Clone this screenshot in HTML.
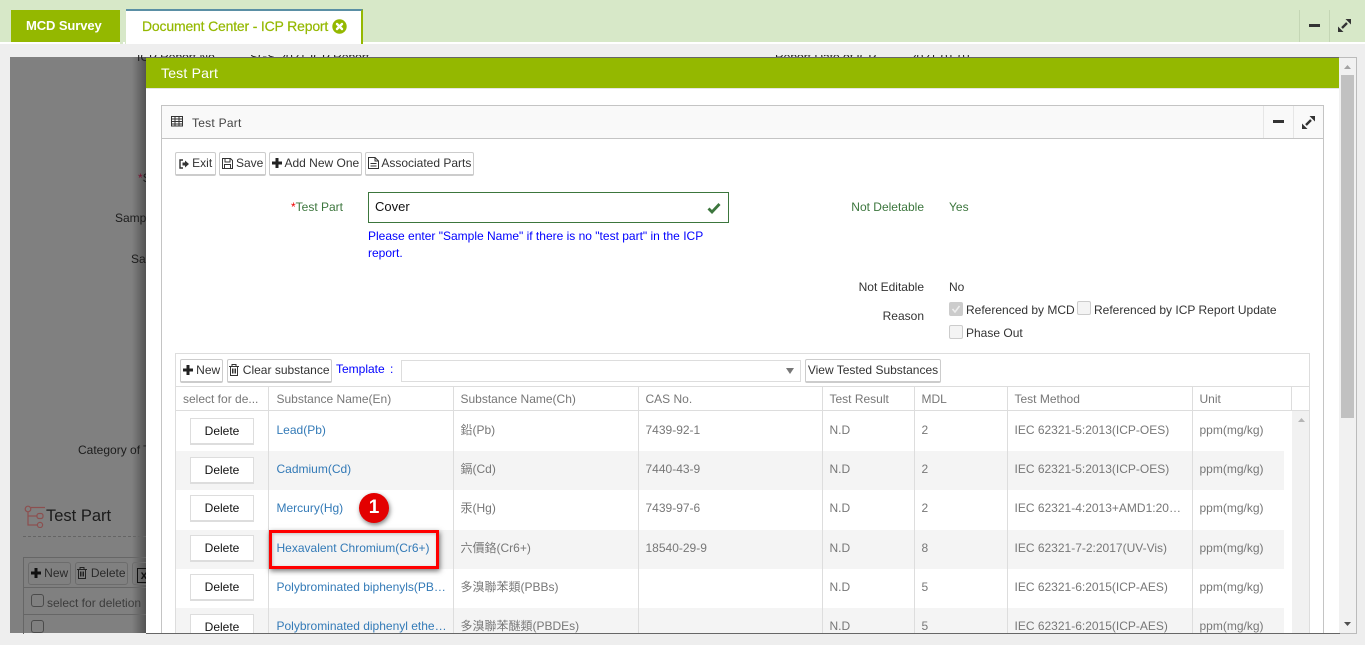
<!DOCTYPE html>
<html><head><meta charset="utf-8">
<style>
html,body{margin:0;padding:0;width:1365px;height:645px;overflow:hidden;background:#eee;font:12px/17px "Liberation Sans","Noto Sans CJK TC",sans-serif;color:#333}
.a{position:absolute;white-space:nowrap}
.btn{position:absolute;height:21px;border:1px solid #ccc;border-bottom:2px solid #ccc;border-radius:2px;background:#fff;line-height:20px;box-sizing:content-box;color:#333;white-space:nowrap;text-align:center}
.btn svg{vertical-align:-2px}
.cb{position:absolute;width:12px;height:12px;border:1px solid #ccc;border-radius:2px;background:#f4f4f4}
.gb{position:absolute;border:1px solid #6c6c6c;border-radius:3px;height:21px;line-height:21px;color:#222;text-align:center;white-space:nowrap}
table{border-collapse:collapse;table-layout:fixed;position:absolute;color:#777}
td{padding:0 7px;border-left:1px solid #ddd;white-space:nowrap;overflow:hidden;text-overflow:ellipsis;box-sizing:border-box}
td:first-child{border-left:0}
.head td{padding-top:2px}
.body tr:nth-child(even) td{background:#f4f4f4}
.body td{vertical-align:top;padding-right:5px;padding-top:10px}
.body tr:nth-child(1) td{padding-top:11px}
.l{color:#337ab7;padding-left:8px !important}
.del{display:block;width:62px;height:24px;border:1px solid #ddd;border-width:1px 1px 2px;background:#fff;color:#111;text-align:center;line-height:24px;margin:5px 0 0 14px}
.body tr:nth-child(1) .del{margin-top:7px}
.body tr:nth-child(2) .del{margin-top:6px}
.body tr:nth-child(6) .del{margin-top:6px}
</style></head><body>

<!-- top bar -->
<div class="a" style="left:0;top:0;width:1365px;height:42px;background:#d7e8c8"></div>
<div class="a" style="left:0;top:42px;width:1365px;height:2px;background:#fff"></div>
<div class="a" style="left:11px;top:10px;width:109px;height:32px;background:#94b800"></div>
<div class="a" style="left:26px;top:17px;color:#fff;font-weight:bold;font-size:13px;letter-spacing:-.1px">MCD Survey</div>
<div class="a" style="left:120px;top:42px;width:3px;height:2px;background:#d7e8c8"></div>
<div class="a" style="left:126px;top:9px;height:35px;background:#fff;border-top:2px solid #5a8fa5;border-right:2px solid #94b800;box-sizing:border-box;width:237px;box-shadow:-1px 0 0 #d7e8c8"></div>
<div class="a" style="left:142px;top:18px;color:#94b800;font-size:14px;letter-spacing:-.18px;-webkit-text-stroke:.2px #94b800">Document Center - ICP Report</div>
<svg class="a" style="left:332px;top:19px" width="15" height="15" viewBox="0 0 15 15"><circle cx="7.5" cy="7.5" r="7.2" fill="#94b800"/><path d="M5 5l5 5M10 5l-5 5" stroke="#fff" stroke-width="2.4" stroke-linecap="round"/></svg>
<div class="a" style="left:1299px;top:10px;width:1px;height:32px;background:#c4d6b5"></div>
<div class="a" style="left:1329px;top:10px;width:1px;height:32px;background:#c4d6b5"></div>
<div class="a" style="left:1309px;top:24px;width:11px;height:3px;background:#333"></div>
<svg class="a" style="left:1338px;top:19px" width="13" height="13" viewBox="0 0 13 13"><path d="M4 9L9 4" stroke="#333" stroke-width="2.4"/><path d="M7.500 0H13V5.500zM0 7.500V13H5.500z" fill="#333"/></svg>

<!-- dimmed background -->
<div class="a" style="left:10px;top:57px;width:136px;height:576px;background:#808080"></div>
<div class="a" style="left:132px;top:57px;width:14px;height:576px;background:linear-gradient(to right,rgba(0,0,0,0),rgba(0,0,0,.35))"></div>

<!-- clipped background text -->
<div class="a" style="left:137px;top:55px;width:900px;height:9px;overflow:hidden;color:#222">
<span class="a" style="left:0;top:-6px">ICP Report No.</span>
<span class="a" style="left:113px;top:-6px">SGS-2021-ICP Report</span>
<span class="a" style="left:638px;top:-6px">Report Date of ICP</span>
<span class="a" style="left:773px;top:-6px">2021-01-01</span>
</div>

<div class="a" style="left:138px;top:170px;color:#7a1030">*<span style="color:#1a1a1a">S</span></div>
<div class="a" style="left:115px;top:210px;color:#1c1c1c">Samp</div>
<div class="a" style="left:131px;top:251px;color:#1c1c1c">Sa</div>
<div class="a" style="left:78px;top:442px;color:#1c1c1c">Category of T</div>
<svg class="a" style="left:24px;top:505px" width="22" height="23" viewBox="0 0 22 23" fill="none" stroke="#8c4f4f" stroke-width="1.2"><circle cx="4" cy="4" r="2.8"/><path d="M7 2.5h14M4 7v13h9M4 11h9"/><rect x="13" y="8.5" width="6" height="5" rx="2"/><circle cx="16" cy="20" r="2.6"/></svg>
<div class="a" style="left:46px;top:506px;font-size:16.5px;line-height:20px;color:#1a1a1a">Test Part</div>
<div class="a" style="left:23px;top:536px;width:123px;border-top:1px dashed #646464"></div>
<div class="a" style="left:23px;top:557px;width:123px;height:76px;border-left:1px solid #666;border-top:1px solid #666"></div>
<div class="a" style="left:24px;top:587px;width:122px;height:1px;background:#666"></div>
<div class="a" style="left:24px;top:614px;width:122px;height:1px;background:#666"></div>
<div class="gb" style="left:28px;top:562px;width:41px"><svg width="10" height="10" viewBox="0 0 10 10" style="vertical-align:-1px"><path d="M3.5 0h3v3.5H10v3H6.500V10h-3V6.500H0v-3h3.500z" fill="#111"/></svg> <span style="color:#2a2a2a">New</span></div>
<div class="gb" style="left:75px;top:562px;width:51px"><svg width="10" height="12" viewBox="0 0 10 12" fill="none" stroke="#222" style="vertical-align:-2px"><path d="M0 2.500h10M3 2.500V.5h4v2M1.500 2.500v9h7v-9M3.500 4.500v5M5 4.500v5M6.500 4.500v5"/></svg> <span style="color:#2a2a2a">Delete</span></div>
<div class="gb" style="left:132px;top:562px;width:20px"></div>
<div class="a" style="left:137px;top:568px;font:bold 12px 'Liberation Sans';color:#111;border:1px solid #111;width:12px;height:13px;line-height:13px;text-align:center">x</div>
<div class="a" style="left:31px;top:594px;width:11px;height:11px;border:1px solid #4b4b4b;border-radius:3px"></div>
<div class="a" style="left:47px;top:595px;color:#3c3c3c">select for deletion</div>
<div class="a" style="left:31px;top:620px;width:11px;height:11px;border:1px solid #4b4b4b;border-radius:3px"></div>

<!-- modal -->
<div class="a" style="left:146px;top:57px;height:577px;background:#fff;overflow:hidden;border-top:1px solid #666;border-right:1px solid #bbb;box-sizing:border-box;width:1211px"></div>
<div class="a" style="left:1339px;top:57px;width:18px;height:1px;background:#bbb"></div>
<div class="a" style="left:146px;top:58px;width:1193px;height:30px;background:#94b800;color:#fff;font-size:14px;letter-spacing:.2px;line-height:30px;padding-left:15px;box-sizing:border-box">Test Part</div>
<div class="a" style="left:146px;top:88px;width:1193px;height:1px;background:#e5e5e5"></div>

<!-- modal scrollbar -->
<div class="a" style="left:1339px;top:58px;width:17px;height:575px;background:#f1f1f1"></div>
<div class="a" style="left:1341px;top:75px;width:13px;height:343px;background:#c1c1c1"></div>
<svg class="a" style="left:1343px;top:64px" width="9" height="6"><path d="M4.500 1L8 5H1z" fill="#a3a3a3"/></svg>
<svg class="a" style="left:1343px;top:621px" width="9" height="6"><path d="M4.500 5L8 1H1z" fill="#505050"/></svg>

<!-- panel -->
<div class="a" style="left:161px;top:105px;width:1163px;height:529px;border:1px solid #c4c4c4;border-bottom:0;box-sizing:border-box"></div>
<div class="a" style="left:162px;top:106px;width:1161px;height:32px;background:#f9f9f9;border-bottom:1px solid #c4c4c4"></div>
<svg class="a" style="left:171px;top:116px" width="12" height="11" viewBox="0 0 12 11" fill="none" stroke="#333"><path d="M.5.500h11v9.500H.5zM.5 3h11M.5 5.500h11M.5 8h11M4 .5V10M8 .5V10"/></svg>
<div class="a" style="left:192px;top:115px;letter-spacing:.25px;color:#444">Test Part</div>
<div class="a" style="left:1263px;top:106px;width:1px;height:32px;background:#e6e6e6"></div>
<div class="a" style="left:1293px;top:106px;width:1px;height:32px;background:#e6e6e6"></div>
<div class="a" style="left:1273px;top:120px;width:11px;height:3px;background:#333"></div>
<svg class="a" style="left:1302px;top:116px" width="13" height="13" viewBox="0 0 13 13"><path d="M4 9L9 4" stroke="#333" stroke-width="2.4"/><path d="M7.500 0H13V5.500zM0 7.500V13H5.500z" fill="#333"/></svg>

<!-- toolbar -->
<div class="btn" style="left:175px;top:152px;width:39px"><svg width="10" height="10" viewBox="0 0 10 10"><path d="M4 1H1v8h3" fill="none" stroke="#333" stroke-width="1.400"/><path d="M3.500 3.500H6V1.500L10 5 6 8.500v-2H3.500z" fill="#333"/></svg> Exit</div>
<div class="btn" style="left:219px;top:152px;width:45px"><svg width="11" height="11" viewBox="0 0 11 11" fill="none" stroke="#333"><path d="M.5.500h8l2 2v8H.5zM3 .5v3.500h5V.5M2.500 10.500V6.500h6v4"/></svg> Save</div>
<div class="btn" style="left:269px;top:152px;width:91px"><svg width="10" height="10" viewBox="0 0 10 10" style="vertical-align:-1px"><path d="M3.500 0h3v3.500H10v3H6.500V10h-3V6.500H0v-3h3.500z" fill="#222"/></svg> Add New One</div>
<div class="btn" style="left:365px;top:152px;width:107px"><svg width="11" height="12" viewBox="0 0 11 12" fill="none" stroke="#333"><path d="M.5.500h6.500l3.500 3.500v7.500H.5zM7 .5V4h3.500M2.500 6.500h6M2.500 9h6"/></svg> Associated Parts</div>

<!-- form -->
<div class="a" style="right:1022px;top:199px;color:#3c763d"><span style="color:#e00">*</span>Test Part</div>
<div class="a" style="left:368px;top:192px;width:361px;height:31px;border:1px solid #3c763d;box-sizing:border-box;font-size:13px;line-height:28px;padding-left:6px;color:#111">Cover</div>
<svg class="a" style="left:707px;top:202px" width="14" height="12" viewBox="0 0 14 12"><path d="M1.500 6.500l3.500 3.500 7.500-8" fill="none" stroke="#3c763d" stroke-width="2.800"/></svg>
<div class="a" style="left:368px;top:228px;color:#00f;line-height:17px">Please enter "Sample Name" if there is no "test part" in the ICP<br>report.</div>
<div class="a" style="right:441px;top:199px;color:#3c763d">Not Deletable</div>
<div class="a" style="left:949px;top:199px;color:#3c763d">Yes</div>
<div class="a" style="right:441px;top:279px">Not Editable</div>
<div class="a" style="left:949px;top:279px">No</div>
<div class="a" style="right:441px;top:308px">Reason</div>
<div class="cb" style="left:949px;top:302px;background:#ccc"></div>
<svg class="a" style="left:951px;top:304px" width="10" height="10" viewBox="0 0 10 10"><path d="M1.500 5l2.500 3 4.500-6" fill="none" stroke="#eee" stroke-width="1.600"/></svg>
<div class="a" style="left:966px;top:302px">Referenced by MCD</div>
<div class="cb" style="left:1077px;top:301px"></div>
<div class="a" style="left:1094px;top:302px">Referenced by ICP Report Update</div>
<div class="cb" style="left:949px;top:325px"></div>
<div class="a" style="left:966px;top:325px">Phase Out</div>

<!-- grid -->
<div class="a" style="left:175px;top:353px;width:1135px;height:281px;border:1px solid #ddd;border-bottom:0;box-sizing:border-box"></div>
<div class="btn" style="left:180px;top:359px;width:41px"><svg width="10" height="10" viewBox="0 0 10 10" style="vertical-align:-1px"><path d="M3.500 0h3v3.500H10v3H6.500V10h-3V6.500H0v-3h3.500z" fill="#222"/></svg> New</div>
<div class="btn" style="left:227px;top:359px;width:103px"><svg width="10" height="12" viewBox="0 0 10 12" fill="none" stroke="#333"><path d="M0 2.500h10M3 2.500V.5h4v2M1.500 2.500v9h7v-9M3.500 4.500v5M5 4.500v5M6.500 4.500v5"/></svg> Clear substance</div>
<div class="a" style="left:336px;top:361px;color:#00f">Template</div>
<div class="a" style="left:390px;top:361px;color:#00f">:</div>
<div class="a" style="left:401px;top:360px;width:400px;height:22px;border:1px solid #ddd;box-sizing:border-box"></div>
<svg class="a" style="left:785px;top:367px" width="10" height="8"><path d="M1 1h8L5 7z" fill="#777"/></svg>
<div class="btn" style="left:805px;top:359px;width:134px">View Tested Substances</div>
<div class="a" style="left:176px;top:386px;width:1133px;height:1px;background:#ddd"></div>
<div class="a" style="left:176px;top:410px;width:1133px;height:1px;background:#ddd"></div>

<table class="head" style="left:176px;top:387px;width:1133px;height:23px">
<colgroup><col style="width:92px"><col style="width:185px"><col style="width:185px"><col style="width:184px"><col style="width:92px"><col style="width:93px"><col style="width:185px"><col style="width:99px"><col style="width:18px"></colgroup>
<tr style="height:23px"><td>select for de...</td><td style="padding-left:8px">Substance Name(En)</td><td>Substance Name(Ch)</td><td>CAS No.</td><td>Test Result</td><td>MDL</td><td>Test Method</td><td>Unit</td><td></td></tr>
</table>

<div class="a" style="left:176px;top:411px;width:1108px;height:222px;overflow:hidden">
<table class="body" style="left:0;top:0;width:1108px">
<colgroup><col style="width:92px"><col style="width:185px"><col style="width:185px"><col style="width:184px"><col style="width:92px"><col style="width:93px"><col style="width:185px"><col style="width:92px"></colgroup>
<tr style="height:40px"><td style="padding:0"><span class="del">Delete</span></td><td class="l">Lead(Pb)</td><td>鉛(Pb)</td><td>7439-92-1</td><td>N.D</td><td>2</td><td>IEC 62321-5:2013(ICP-OES)</td><td>ppm(mg/kg)</td></tr>
<tr style="height:39px"><td style="padding:0"><span class="del">Delete</span></td><td class="l">Cadmium(Cd)</td><td>鎘(Cd)</td><td>7440-43-9</td><td>N.D</td><td>2</td><td>IEC 62321-5:2013(ICP-OES)</td><td>ppm(mg/kg)</td></tr>
<tr style="height:40px"><td style="padding:0"><span class="del">Delete</span></td><td class="l">Mercury(Hg)</td><td>汞(Hg)</td><td>7439-97-6</td><td>N.D</td><td>2</td><td>IEC 62321-4:2013+AMD1:2017(ICP-OES)</td><td>ppm(mg/kg)</td></tr>
<tr style="height:39px"><td style="padding:0"><span class="del">Delete</span></td><td class="l">Hexavalent Chromium(Cr6+)</td><td>六價鉻(Cr6+)</td><td>18540-29-9</td><td>N.D</td><td>8</td><td>IEC 62321-7-2:2017(UV-Vis)</td><td>ppm(mg/kg)</td></tr>
<tr style="height:39px"><td style="padding:0"><span class="del">Delete</span></td><td class="l">Polybrominated biphenyls(PBBs)</td><td>多溴聯苯類(PBBs)</td><td></td><td>N.D</td><td>5</td><td>IEC 62321-6:2015(ICP-AES)</td><td>ppm(mg/kg)</td></tr>
<tr style="height:39px"><td style="padding:0"><span class="del">Delete</span></td><td class="l">Polybrominated diphenyl ethers(PBDEs)</td><td>多溴聯苯醚類(PBDEs)</td><td></td><td>N.D</td><td>5</td><td>IEC 62321-6:2015(ICP-AES)</td><td>ppm(mg/kg)</td></tr>
</table>
</div>

<!-- grid scrollbar -->
<div class="a" style="left:1292px;top:411px;width:17px;height:222px;background:#f1f1f1"></div>
<svg class="a" style="left:1297px;top:417px" width="9" height="6"><path d="M4.500 1L8 5H1z" fill="#b5b5b5"/></svg>

<!-- bottom edge -->
<div class="a" style="left:146px;top:633px;width:1194px;height:1px;background:#666"></div>
<div class="a" style="left:1340px;top:633px;width:17px;height:1px;background:#bbb"></div>
<div class="a" style="left:0;top:634px;width:1365px;height:11px;background:#eee"></div>

<!-- annotation -->
<div class="a" style="left:269px;top:530px;width:170px;height:39px;border:3px solid #f00;box-sizing:border-box;box-shadow:1px 2px 5px rgba(0,0,0,.55), inset 1px 1px 3px rgba(0,0,0,.2)"></div>
<div class="a" style="left:359px;top:493px;width:30px;height:30px;border-radius:50%;background:#e30000;color:#fff;font:bold 19px/30px 'Liberation Sans';text-align:center;box-shadow:1px 2px 5px rgba(0,0,0,.5)">1</div>

</body></html>
